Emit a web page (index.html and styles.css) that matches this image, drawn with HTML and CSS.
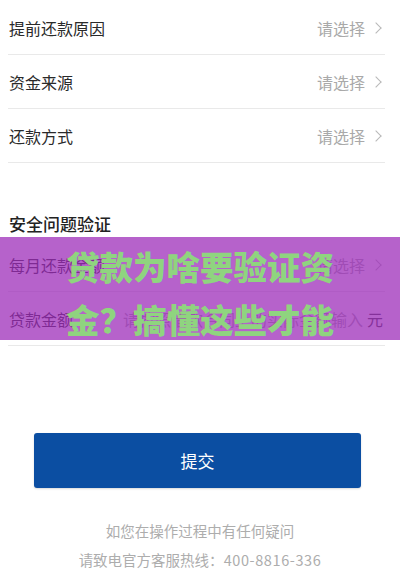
FILE: index.html
```html
<!DOCTYPE html>
<html lang="zh-CN">
<head>
<meta charset="utf-8">
<title>提前还款</title>
<link rel="stylesheet" href="styles.css">
</head>
<body>
<div class="page">
  <ul class="form-list top">
    <li class="row"><span class="label">提前还款原因</span><span class="value">请选择<i class="chev"></i></span></li>
    <li class="row"><span class="label">资金来源</span><span class="value">请选择<i class="chev"></i></span></li>
    <li class="row"><span class="label">还款方式</span><span class="value">请选择<i class="chev"></i></span></li>
  </ul>

  <h2 class="section-title">安全问题验证</h2>

  <ul class="form-list">
    <li class="row"><span class="label">每月还款金额</span><span class="value">请选择<i class="chev"></i></span></li>
    <li class="row"><span class="label">贷款金额</span><span class="value">请按照借款合同上的实际金额输入<span class="unit">元</span></span></li>
  </ul>

  <div class="actions">
    <button class="submit" type="button">提交</button>
  </div>

  <div class="help">
    <p>如您在操作过程中有任何疑问</p>
    <p>请致电官方客服热线：<span class="tel">400-8816-336</span></p>
  </div>

  <div class="banner">
    <p>贷款为啥要验证资<br>金？搞懂这些才能</p>
  </div>
</div>
</body>
</html>
```

FILE: styles.css
```css
* { box-sizing: border-box; }

html, body {
  margin: 0;
  padding: 0;
  background: #fff;
}

body {
  font-family: "Noto Sans CJK SC", "Noto Sans", "Liberation Sans", sans-serif;
  color: #333;
}

.page {
  position: relative;
  width: 400px;
  height: 579px;
  overflow: hidden;
  padding-top: 1px;
}

.form-list {
  list-style: none;
  margin: 0 15px 0 8px;
  padding: 0;
}

.row {
  height: 54px;
  display: flex;
  align-items: center;
  justify-content: space-between;
  border-bottom: 1px solid #e9e9e9;
  padding: 0 2px 0 1px;
  font-size: 16px;
}

.label {
  color: #2a2a2a;
}

.value {
  display: flex;
  align-items: center;
  color: #a9a9a9;
}

.chev {
  display: inline-block;
  width: 8px;
  height: 8px;
  border-top: 1.3px solid #b8b8b8;
  border-right: 1.3px solid #b8b8b8;
  transform: rotate(45deg);
  margin: 0 3px 0 7px;
}

.unit {
  color: #444;
  margin-left: 4px;
}

.section-title {
  margin: 0;
  padding: 48px 0 0 9px;
  height: 75px;
  font-size: 17px;
  font-weight: 500;
  color: #222;
  line-height: 25px;
}

.actions {
  display: flex;
  justify-content: center;
  padding: 87px 0 0 0;
}

.submit {
  width: 327px;
  height: 55px;
  margin-left: -5px;
  border: 0;
  border-radius: 3px;
  background: #0b4ea2;
  color: #fff;
  font-family: inherit;
  font-size: 17px;
  box-shadow: 0 1px 2px rgba(0, 0, 0, 0.15);
}

.help {
  padding-top: 28px;
  text-align: center;
  color: #adadad;
  font-size: 14.5px;
  line-height: 29px;
}

.help p {
  margin: 0;
}

.tel {
  letter-spacing: 0.6px;
}

/* promo banner laid over the form */
.banner {
  position: absolute;
  left: 0;
  top: 237px;
  width: 400px;
  height: 103px;
  background: rgba(156, 43, 185, 0.74);
  display: flex;
  align-items: center;
  justify-content: center;
}

.banner p {
  margin: 6px 0 0 0;
  color: #8fd47f;
  font-size: 33.5px;
  font-weight: 900;
  line-height: 53px;
  text-align: left;
  letter-spacing: 0;
}
```
